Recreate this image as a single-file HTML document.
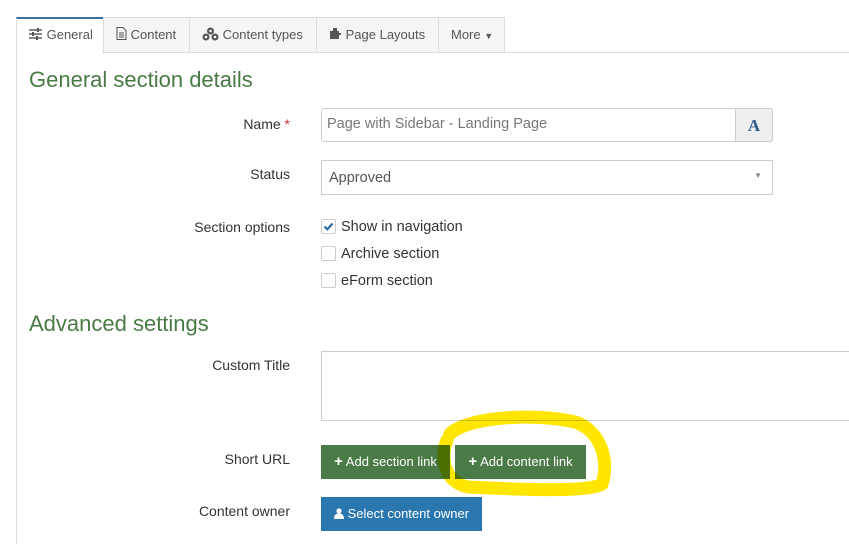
<!DOCTYPE html>
<html><head><meta charset="utf-8"><style>
body{margin:0;width:849px;height:544px;background:#fff;font-family:"Liberation Sans",sans-serif;position:relative;overflow:hidden;color:#333}
.a{position:absolute}
.tabbar{left:16px;top:52px;width:833px;height:1px;background:#ddd}
.tab{position:absolute;top:17px;height:35px;background:#f5f5f5;border:1px solid #ddd;border-bottom:none;box-sizing:border-box;font-size:13px;line-height:33px;color:#555;padding-left:12px}
.lbl{position:absolute;right:559px;font-size:14px;color:#333;text-align:right}
h2{position:absolute;margin:0;font-weight:normal;font-size:22px;color:#4a7a45}
.inp{position:absolute;border:1px solid #ccc;box-sizing:border-box;font-size:14.5px;color:#555;background:#fff}
.cb{position:absolute;left:321px;width:15px;height:15px;border:1px solid #ccc;border-radius:2px;box-sizing:border-box;background:#fff}
.cbl{position:absolute;left:341px;font-size:14.5px;color:#333}
.btn{position:absolute;height:34px;color:#fff;font-size:13px;line-height:34px;text-align:center;box-sizing:border-box}
</style></head><body>
<div class="a tabbar"></div>
<div class="a" style="left:16px;top:52px;width:1px;height:492px;background:#ddd"></div>
<div class="tab" style="left:16px;width:88px;background:#fff;border-top:2px solid #3b6f9c;height:37px;padding-left:12px;line-height:32px">
<svg width="14" height="12" viewBox="0 0 14 12" style="vertical-align:-1px"><g stroke="#555" stroke-width="1.4"><line x1="0" y1="2" x2="13" y2="2"/><line x1="0" y1="6" x2="13" y2="6"/><line x1="0" y1="10" x2="13" y2="10"/></g><g fill="#555"><rect x="8" y="0" width="2" height="4"/><rect x="3" y="4" width="2" height="4"/><rect x="7" y="8" width="2" height="4"/></g></svg> General</div>
<div class="tab" style="left:103px;width:87px">
<svg width="11" height="13" viewBox="0 0 11 13" style="vertical-align:-1px"><path d="M1 .5h6l3 3v9H1z" fill="none" stroke="#555"/><g stroke="#555"><line x1="3" y1="6" x2="8" y2="6"/><line x1="3" y1="8" x2="8" y2="8"/><line x1="3" y1="10" x2="8" y2="10"/></g></svg> Content</div>
<div class="tab" style="left:189px;width:128px">
<svg width="17" height="14" viewBox="0 0 17 14" style="vertical-align:-2px"><g fill="#555"><circle cx="8.5" cy="4" r="3.5"/><circle cx="4" cy="10" r="3.5"/><circle cx="13" cy="10" r="3.5"/></g><g fill="#fff"><circle cx="8.5" cy="4" r="1.3"/><circle cx="4" cy="10" r="1.3"/><circle cx="13" cy="10" r="1.3"/></g></svg> Content types</div>
<div class="tab" style="left:316px;width:123px">
<svg width="13" height="13" viewBox="0 0 13 13" style="vertical-align:-1px"><path d="M1 4h3V1h4v3h2v2h2v2h-2v4H1z" fill="#555"/></svg> Page Layouts</div>
<div class="tab" style="left:438px;width:67px">More <span style="font-size:9px">▼</span></div>

<h2 style="left:29px;top:67px">General section details</h2>
<div class="lbl" style="top:116px">Name <span style="color:#c33">*</span></div>
<div class="inp" style="left:321px;top:108px;width:452px;height:34px;border-radius:3px;padding:7px 0 0 5px;color:#777">Page with Sidebar - Landing Page</div>
<div class="a" style="left:735px;top:108px;width:38px;height:34px;background:#eee;border:1px solid #ccc;box-sizing:border-box;border-radius:0 3px 3px 0;text-align:center;font:bold 17px 'Liberation Serif',serif;color:#2a5b8c;line-height:33px">A</div>
<div class="lbl" style="top:166px">Status</div>
<div class="inp" style="left:321px;top:160px;width:452px;height:35px;padding:9px 0 0 7px">Approved<span style="position:absolute;right:10px;top:10px;font-size:8px;color:#888">▼</span></div>
<div class="lbl" style="top:219px">Section options</div>
<div class="cb" style="top:219px"><svg width="13" height="13" viewBox="0 0 13 13" style="position:absolute;left:0;top:0"><path d="M2.5 6.5l2.8 2.8L10.5 3.5" fill="none" stroke="#2a6aa6" stroke-width="2.2"/></svg></div>
<div class="cbl" style="top:219px">Show in navigation</div>
<div class="cb" style="top:246px"></div><div class="cbl" style="top:246px">Archive section</div>
<div class="cb" style="top:273px"></div><div class="cbl" style="top:273px">eForm section</div>

<h2 style="left:29px;top:311px">Advanced settings</h2>
<div class="lbl" style="top:357px">Custom Title</div>
<div class="inp" style="left:321px;top:351px;width:540px;height:70px"></div>
<div class="lbl" style="top:451px">Short URL</div>
<div class="btn" style="left:321px;top:445px;width:129px;background:#4a7a45"><b style="font-size:15px">+</b> Add section link</div>
<div class="btn" style="left:455px;top:445px;width:131px;background:#4a7a45"><b style="font-size:15px">+</b> Add content link</div>
<div class="lbl" style="top:503px">Content owner</div>
<div class="btn" style="left:321px;top:497px;width:161px;background:#2a77b0">
<svg width="10" height="11" viewBox="0 0 10 11" style="vertical-align:-1px"><circle cx="5" cy="3" r="2.6" fill="#fff"/><path d="M0 11c0-4 2-5.5 5-5.5s5 1.5 5 5.5z" fill="#fff"/></svg> Select content owner</div>

<svg class="a" style="left:0;top:0;mix-blend-mode:multiply" width="849" height="544"><path d="M450 434C465 418 530 412 575 422C600 430 610 460 602 484C590 492 530 490 468 487C444 482 440 458 447 440" fill="none" stroke="#ffe600" stroke-width="13" stroke-linecap="round"/></svg>
</body></html>
